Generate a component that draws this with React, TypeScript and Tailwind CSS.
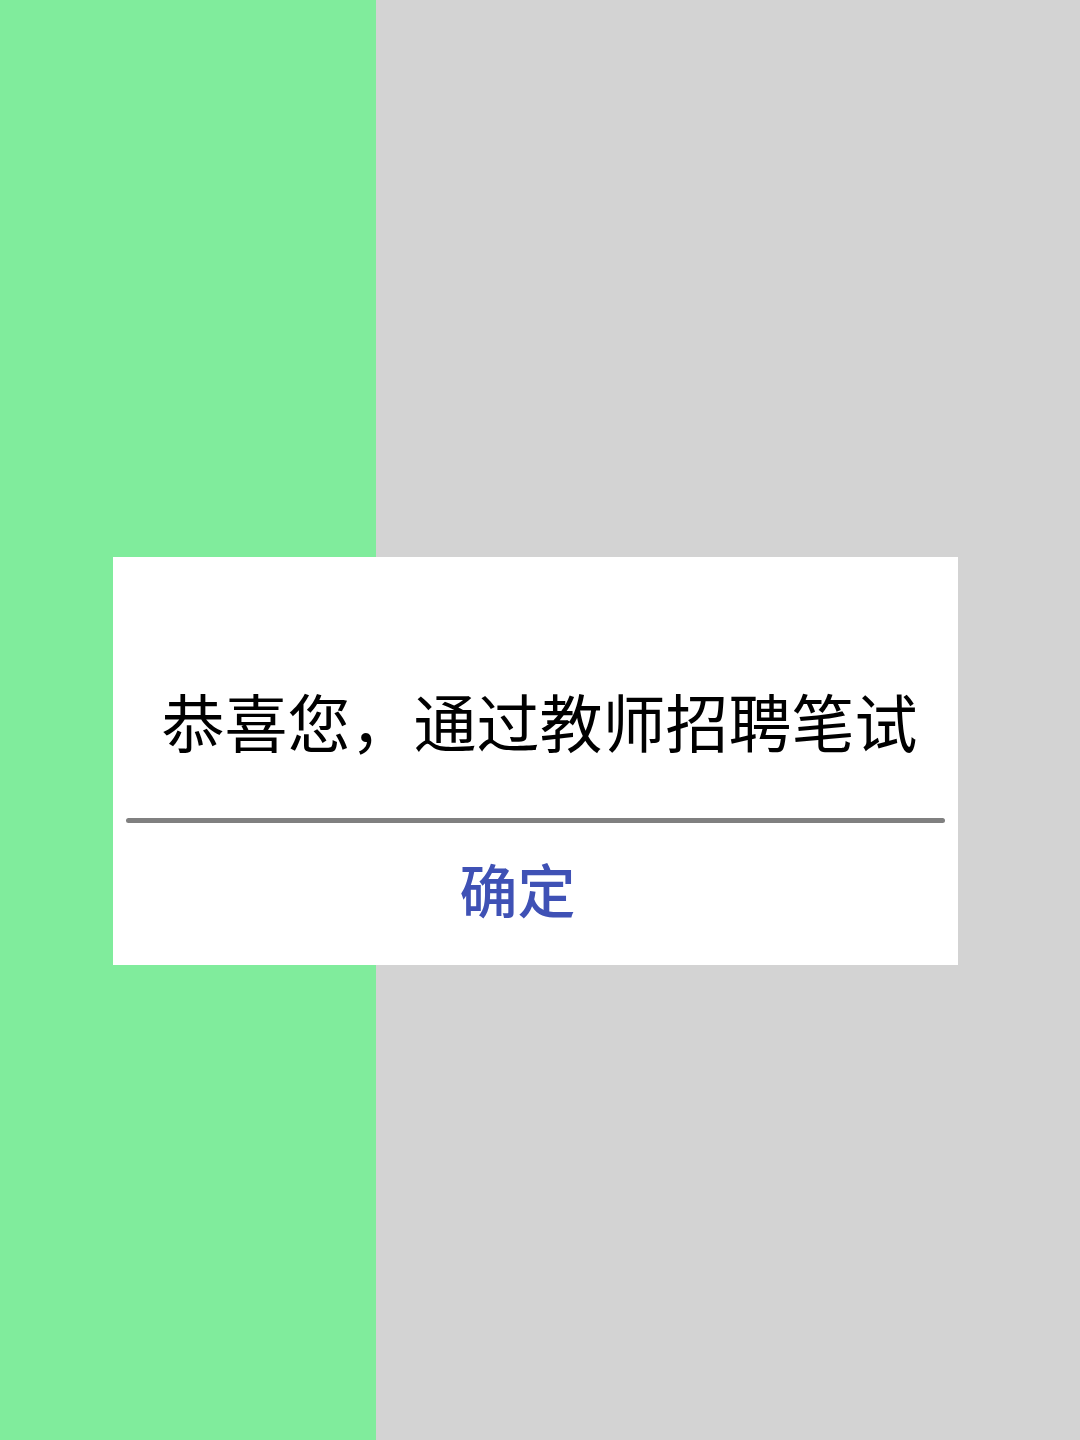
export default function App() {
  return (
    <div
      className="relative flex h-[1440px] w-[1080px] overflow-hidden"
      style={{ fontFamily: '"Noto Sans CJK SC", "Noto Sans", sans-serif' }}
    >
      <div className="w-[376px] bg-[#80ec9c]" />
      <div className="flex-1 bg-[#d3d3d3]" />

      {/* dialog */}
      <div className="absolute left-[113px] top-[557px] flex h-[408px] w-[845px] flex-col bg-white">
        <div className="pl-[8px] pt-[131px] text-center text-[63px] leading-none text-black">
          恭喜您，通过教师招聘笔试
        </div>
        <div className="mx-[13px] mt-[67px] h-[5px] rounded-full bg-[#808080]" />
        <button className="mt-[36px] pr-[36px] text-center text-[58px] font-medium leading-none text-[#3f51b5]">
          确定
        </button>
      </div>
    </div>
  );
}
